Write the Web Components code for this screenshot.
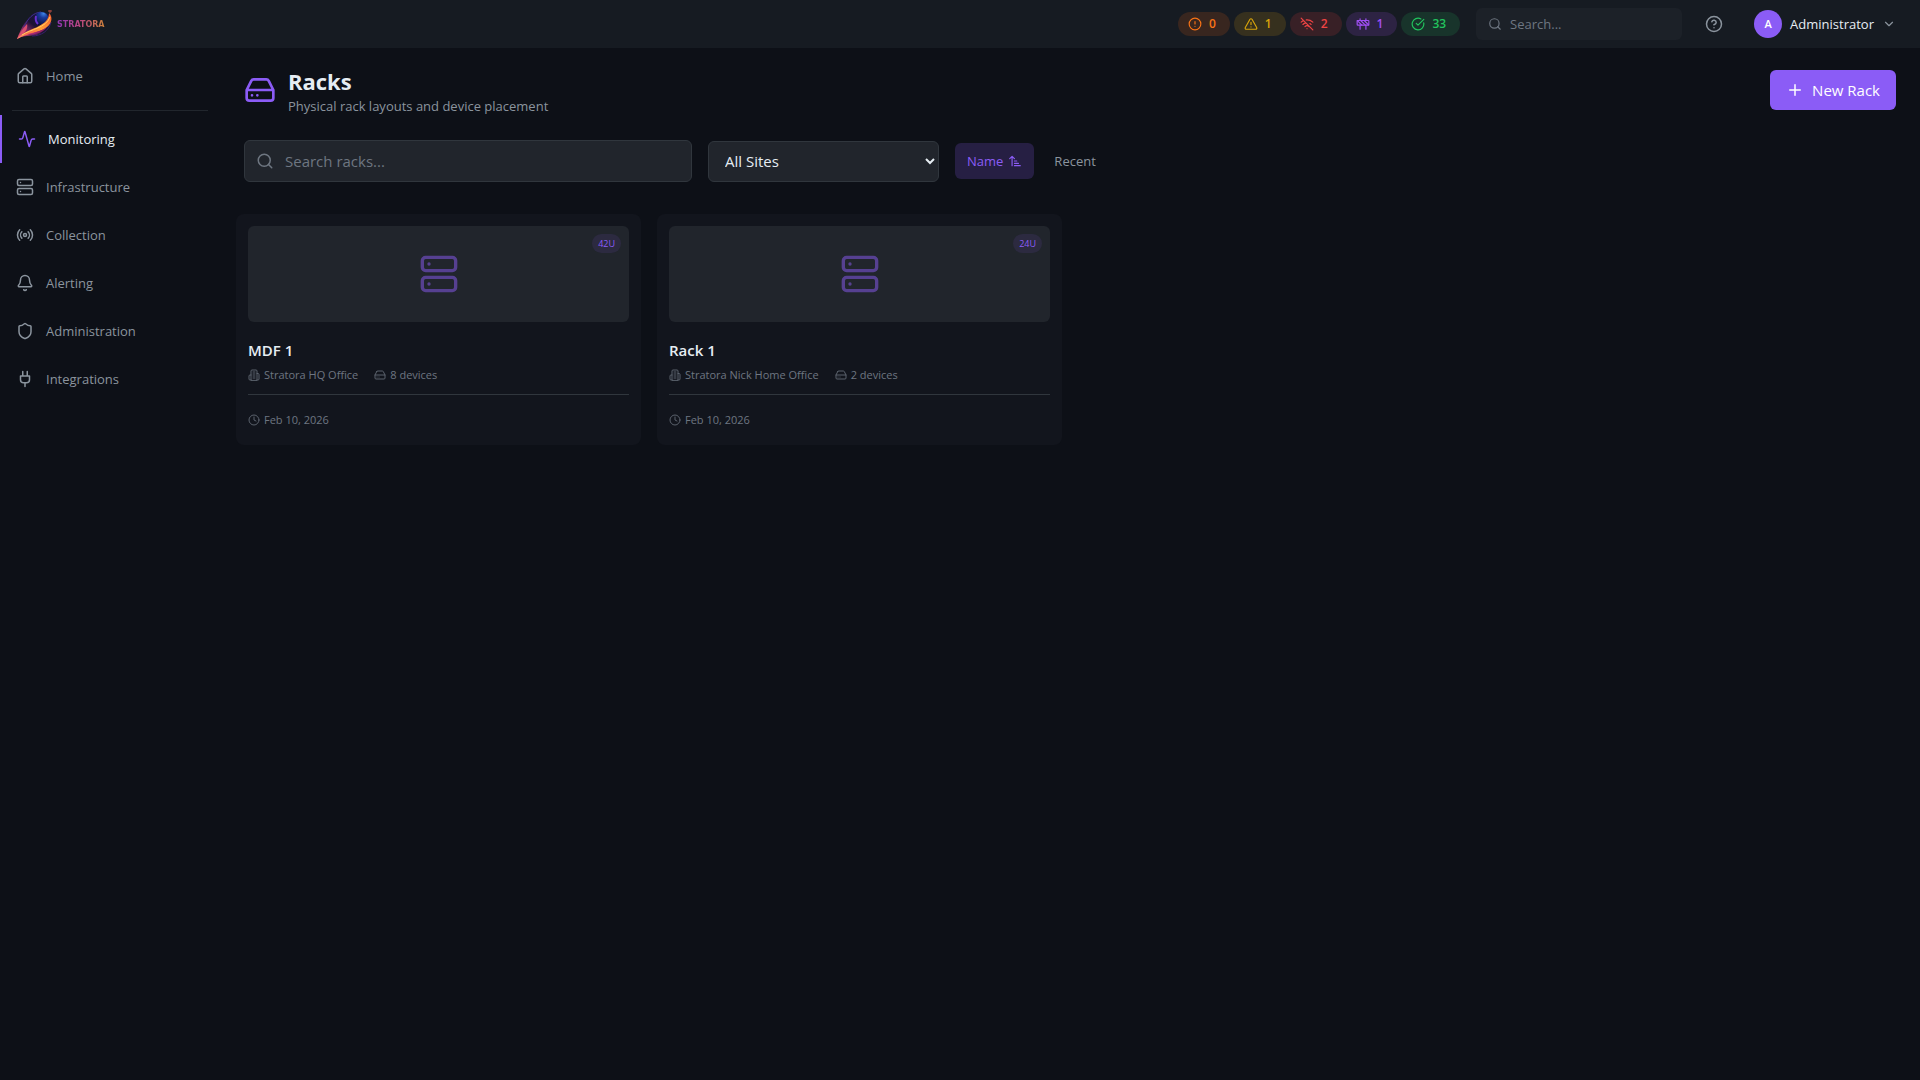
<!DOCTYPE html>
<html lang="en">
<head>
<meta charset="utf-8">
<title>Stratora - Racks</title>
<style>
    :root {
        --bg: #0d1017;
        --bar: #161b22;
        --card: #12151d;
        --surface: #21252c;
        --border: #30363d;
        --text: #e6edf3;
        --muted: #8b949e;
        --dim: #6e7681;
        --accent: #8b5cf6;
    }
    body {
        margin: 0;
        background: var(--bg);
        color: var(--text);
        font-family: "Open Sans", "Noto Sans", sans-serif;
        font-size: 13px;
        line-height: 20px;
    }
</style>
</head>
<body>
<rack-app></rack-app>

<template id="rack-app">
    <style>
        :host {
            display: flex;
            flex-direction: column;
            min-height: 100vh;
        }
        .body {
            display: flex;
            flex: 1;
        }
        main {
            flex: 1;
            min-width: 0;
            padding: 16px;
        }
        .cards {
            display: grid;
            grid-template-columns: repeat(auto-fill, minmax(360px, 1fr));
            gap: 16px;
            margin-top: 32px;
        }
    </style>
    <top-bar></top-bar>
    <div class="body">
        <side-nav></side-nav>
        <main>
            <page-header icon="drive">
                <span slot="title">Racks</span>
                <span slot="subtitle">Physical rack layouts and device placement</span>
                <span slot="action">New Rack</span>
            </page-header>
            <filter-bar></filter-bar>
            <div class="cards">
                <rack-card units="42U" site="Stratora HQ Office" devices="8 devices" date="Feb 10, 2026">MDF 1</rack-card>
                <rack-card units="24U" site="Stratora Nick Home Office" devices="2 devices" date="Feb 10, 2026">Rack 1</rack-card>
            </div>
        </main>
    </div>
</template>

<template id="top-bar">
    <style>
        :host {
            display: block;
            background: var(--bar);
        }
        header {
            display: flex;
            align-items: center;
            justify-content: space-between;
            height: 48px;
            padding: 0 24px 0 16px;
        }
        .right, .chips, .user {
            display: flex;
            align-items: center;
        }
        .chips {
            gap: 4px;
            margin-right: 16px;
        }
        .search {
            display: flex;
            align-items: center;
            gap: 8px;
            box-sizing: border-box;
            width: 206px;
            height: 32px;
            padding: 0 12px;
            border-radius: 6px;
            background: #1c2128;
            color: var(--dim);
        }
        input {
            flex: 1;
            min-width: 0;
            padding: 0;
            border: 0;
            outline: 0;
            background: none;
            color: var(--text);
            font: inherit;
        }
        input::placeholder {
            color: var(--dim);
        }
        button {
            border: 0;
            padding: 0;
            background: none;
            color: var(--muted);
            font: inherit;
            cursor: pointer;
        }
        .help {
            display: flex;
            margin: 0 31px 0 23px;
        }
        .user {
            gap: 8px;
        }
        .avatar {
            width: 28px;
            height: 28px;
            border-radius: 50%;
            background: var(--accent);
            color: #fff;
            font-size: 11px;
            font-weight: 600;
            line-height: 28px;
            text-align: center;
        }
        .name {
            color: var(--text);
        }
    </style>
    <header>
        <brand-logo>STRATORA</brand-logo>
        <div class="right">
            <div class="chips">
                <status-chip icon="alert" tone="orange">0</status-chip>
                <status-chip icon="warning" tone="yellow">1</status-chip>
                <status-chip icon="wifi-off" tone="red">2</status-chip>
                <status-chip icon="barrier" tone="purple">1</status-chip>
                <status-chip icon="check" tone="green">33</status-chip>
            </div>
            <div class="search">
                <svg-icon name="search" size="14"></svg-icon>
                <input type="search" placeholder="Search..." aria-label="Search">
            </div>
            <button class="help" aria-label="Help"><svg-icon name="help" size="18"></svg-icon></button>
            <button class="user">
                <span class="avatar">A</span>
                <span class="name">Administrator</span>
                <svg-icon name="chevron" size="14"></svg-icon>
            </button>
        </div>
    </header>
</template>

<template id="brand-logo">
    <style>
        :host {
            display: flex;
            align-items: center;
            gap: 3px;
        }
        span {
            padding-top: 2px;
            font: bold 8px/10px "DejaVu Sans", sans-serif;
            background: linear-gradient(90deg, #8f35b5, #b8477c 50%, #c9803a);
            -webkit-background-clip: text;
            background-clip: text;
            color: transparent;
        }
        svg {
            display: block;
        }
    </style>
    <svg width="38" height="32" viewBox="0 0 38 32" aria-hidden="true">
        <defs>
            <linearGradient id="flame" x1="0" y1="1" x2="1" y2="0">
                <stop offset="0" stop-color="#ffa070"/>
                <stop offset=".25" stop-color="#f9694a"/>
                <stop offset=".55" stop-color="#ff9b35"/>
                <stop offset="1" stop-color="#f4572f"/>
            </linearGradient>
            <linearGradient id="trail" x1="0" y1="1" x2="1" y2="0">
                <stop offset="0" stop-color="#e8566a"/>
                <stop offset=".3" stop-color="#7a2866"/>
                <stop offset=".5" stop-color="#1d1233"/>
                <stop offset="1" stop-color="#171a45"/>
            </linearGradient>
            <radialGradient id="globe" cx=".65" cy=".1" r=".9">
                <stop offset="0" stop-color="#3f86e8"/>
                <stop offset=".35" stop-color="#193a9c"/>
                <stop offset="1" stop-color="#0d0d35"/>
            </radialGradient>
        </defs>
        <path d="M1 31C5 21 11 7 21 4c8-2 14 2 14 8 0 7-7 13-14 15-7 1-13 0-20 4z" fill="url(#trail)"/>
        <path d="M16 28c9 0 17-5 19-14" fill="none" stroke="#3a1f70"/>
        <path d="M8 19C12 10 17 5 25 4" fill="none" stroke="#40308c"/>
        <circle cx="25.500" cy="11" r="7" fill="url(#globe)"/>
        <path d="M20 8c-1 4 0 6 2 8" fill="none" stroke="#6a30cf" stroke-width="2"/>
        <path d="M1 31C4 25 7 20 11 16c1 4-1 7-3 9z" fill="#d94e70"/>
        <path d="M1 31C8 23 16 22 23 18c6-3 10-7 10-13 4 4 3 10-2 14-7 6-20 6-30 12z" fill="url(#flame)"/>
        <path d="M12 26c7-2 14-3 19-7-4 6-12 8-19 7z" fill="#c5267c" opacity=".7"/>
        <path d="M6 27c9-6 24-7 28-18" fill="none" stroke="#ffd060"/>
        <path d="M34 2v3M32 3h4" stroke="#b04a42"/>
    </svg>
    <span><slot></slot></span>
</template>

<template id="status-chip">
    <style>
        :host {
            display: flex;
            align-items: center;
            gap: 7px;
            height: 24px;
            padding: 0 14px 0 10px;
            border-radius: 12px;
            font-size: 12px;
            font-weight: 600;
        }
        :host([tone="orange"]) { color: #f97316; background: #38261f; }
        :host([tone="yellow"]) { color: #d9a40b; background: #36301e; }
        :host([tone="red"]) { color: #ef4444; background: #382026; }
        :host([tone="purple"]) { color: #a04ff5; background: #2d2343; }
        :host([tone="green"]) { color: #22c55e; background: #18342b; }
    </style>
    <svg-icon size="14"></svg-icon>
    <slot></slot>
</template>

<template id="side-nav">
    <style>
        :host {
            display: block;
            width: 220px;
            padding-top: 4px;
        }
        hr {
            height: 1px;
            margin: 10px 12px 4px;
            border: 0;
            background: #21262d;
        }
    </style>
    <nav>
        <nav-item icon="home">Home</nav-item>
        <hr>
        <nav-item icon="activity" active>Monitoring</nav-item>
        <nav-item icon="server">Infrastructure</nav-item>
        <nav-item icon="radio">Collection</nav-item>
        <nav-item icon="bell">Alerting</nav-item>
        <nav-item icon="shield">Administration</nav-item>
        <nav-item icon="plug">Integrations</nav-item>
    </nav>
</template>

<template id="nav-item">
    <style>
        :host {
            display: block;
        }
        a {
            display: flex;
            align-items: center;
            gap: 12px;
            height: 48px;
            padding: 0 16px;
            color: var(--muted);
            text-decoration: none;
        }
        :host([active]) a {
            border-left: 2px solid var(--accent);
            color: var(--text);
        }
        :host([active]) svg-icon {
            color: var(--accent);
        }
    </style>
    <a href="#"><svg-icon size="18"></svg-icon><slot></slot></a>
</template>

<template id="page-header">
    <style>
        :host {
            display: flex;
            align-items: center;
            justify-content: space-between;
            padding: 0 8px;
            height: 52px;
        }
        .heading {
            display: flex;
            align-items: center;
            gap: 12px;
        }
        .heading svg-icon {
            color: var(--accent);
        }
        h1 {
            margin: 0;
            padding-top: 2px;
            font-size: 22px;
            font-weight: 700;
            line-height: 30px;
        }
        p {
            margin: 0;
            color: var(--muted);
        }
        button {
            display: flex;
            align-items: center;
            gap: 8px;
            height: 40px;
            padding: 0 16px;
            border: 0;
            border-radius: 6px;
            background: var(--accent);
            color: #fff;
            font: inherit;
            font-size: 15px;
            cursor: pointer;
        }
    </style>
    <div class="heading">
        <svg-icon size="32"></svg-icon>
        <div>
            <h1><slot name="title"></slot></h1>
            <p><slot name="subtitle"></slot></p>
        </div>
    </div>
    <button><svg-icon name="plus" size="18"></svg-icon><slot name="action"></slot></button>
</template>

<template id="filter-bar">
    <style>
        :host {
            display: flex;
            align-items: center;
            gap: 16px;
            margin-top: 24px;
            padding: 0 8px;
        }
        .search {
            display: flex;
            align-items: center;
            gap: 11px;
            flex: 0 1 448px;
            box-sizing: border-box;
            height: 42px;
            padding: 0 11px;
            border: 1px solid var(--border);
            border-radius: 6px;
            background: var(--surface);
            color: var(--dim);
        }
        input {
            flex: 1;
            min-width: 0;
            padding: 0;
            border: 0;
            outline: 0;
            background: none;
            color: var(--text);
            font: inherit;
            font-size: 15px;
        }
        input::placeholder {
            color: var(--dim);
        }
        select {
            width: 231px;
            height: 41px;
            padding: 0 12px;
            border: 1px solid var(--border);
            border-radius: 6px;
            background: var(--surface);
            color: var(--text);
            font: inherit;
            font-size: 15px;
        }
        .sort {
            display: flex;
            gap: 8px;
        }
        button {
            display: flex;
            align-items: center;
            gap: 5px;
            height: 36px;
            padding: 0 12px;
            border: 0;
            border-radius: 6px;
            background: none;
            color: var(--muted);
            font: inherit;
            cursor: pointer;
        }
        .on {
            background: #261f43;
            color: var(--accent);
        }
    </style>
    <div class="search">
        <svg-icon name="search" size="18"></svg-icon>
        <input type="search" placeholder="Search racks..." aria-label="Search racks">
    </div>
    <select aria-label="Site"><option>All Sites</option></select>
    <div class="sort">
        <button class="on">Name <svg-icon name="sort" size="14"></svg-icon></button>
        <button>Recent</button>
    </div>
</template>

<template id="rack-card">
    <style>
        :host {
            display: block;
            padding: 12px;
            border-radius: 8px;
            background: var(--card);
            color: var(--dim);
            font-size: 11px;
        }
        .preview {
            position: relative;
            display: flex;
            align-items: center;
            justify-content: center;
            height: 96px;
            border-radius: 6px;
            background: var(--surface);
        }
        .preview svg-icon {
            color: var(--accent);
            opacity: .5;
        }
        .units {
            position: absolute;
            top: 8px;
            right: 8px;
            padding: 0 6px;
            border-radius: 10px;
            background: #2c2a40;
            color: var(--accent);
            font-size: 9px;
            line-height: 19px;
        }
        h2 {
            margin: 16px 0 0;
            color: var(--text);
            font-size: 15px;
            font-weight: 600;
            line-height: 24px;
        }
        .meta, .item, .date {
            display: flex;
            align-items: center;
        }
        .meta {
            gap: 16px;
            margin-top: 3px;
        }
        .item, .date {
            gap: 4px;
        }
        .date {
            margin-top: 9px;
            padding: 15px 0 3px;
            border-top: 1px solid var(--border);
        }
        .item svg-icon, .date svg-icon {
            opacity: .8;
        }
    </style>
    <div class="preview">
        <svg-icon name="server" size="40"></svg-icon>
        <span class="units"></span>
    </div>
    <h2><slot></slot></h2>
    <div class="meta">
        <div class="item"><svg-icon name="building" size="12"></svg-icon><span class="site"></span></div>
        <div class="item"><svg-icon name="drive" size="12"></svg-icon><span class="devices"></span></div>
    </div>
    <div class="date"><svg-icon name="clock" size="12"></svg-icon><time></time></div>
</template>

<script>
    // 24x24 stroke icons
    const ICONS = {
        home: '<path d="M15 21v-8a1 1 0 0 0-1-1h-4a1 1 0 0 0-1 1v8"/><path d="M3 10a2 2 0 0 1 .709-1.528l7-5.999a2 2 0 0 1 2.582 0l7 5.999A2 2 0 0 1 21 10v9a2 2 0 0 1-2 2H5a2 2 0 0 1-2-2z"/>',
        activity: '<path d="M22 12h-2.480a2 2 0 0 0-1.930 1.460l-2.350 8.360a.25.25 0 0 1-.48 0L9.240 2.180a.25.25 0 0 0-.48 0l-2.350 8.360A2 2 0 0 1 4.490 12H2"/>',
        server: '<rect x="2" y="2" width="20" height="8" rx="2"/><rect x="2" y="14" width="20" height="8" rx="2"/><path d="M6 6h.01M6 18h.01"/>',
        radio: '<path d="M4.900 19.100C1 15.200 1 8.800 4.900 4.900M7.800 16.200c-2.300-2.300-2.300-6.100 0-8.500M16.200 7.800c2.300 2.300 2.300 6.100 0 8.500M19.100 4.900C23 8.800 23 15.100 19.100 19"/><circle cx="12" cy="12" r="2"/>',
        bell: '<path d="M10.268 21a2 2 0 0 0 3.464 0M3.262 15.326A1 1 0 0 0 4 17h16a1 1 0 0 0 .74-1.673C19.410 13.956 18 12.499 18 8A6 6 0 0 0 6 8c0 4.499-1.411 5.956-2.738 7.326"/>',
        shield: '<path d="M20 13c0 5-3.500 7.500-7.660 8.950a1 1 0 0 1-.67-.01C7.500 20.500 4 18 4 13V6a1 1 0 0 1 1-1c2 0 4.500-1.200 6.240-2.720a1.170 1.170 0 0 1 1.520 0C14.510 3.810 17 5 19 5a1 1 0 0 1 1 1z"/>',
        plug: '<path d="M12 22v-5M9 8V2M15 8V2M18 8v5a4 4 0 0 1-4 4h-4a4 4 0 0 1-4-4V8z"/>',
        drive: '<path d="M22 12H2M5.450 5.110 2 12v6a2 2 0 0 0 2 2h16a2 2 0 0 0 2-2v-6l-3.450-6.890A2 2 0 0 0 16.760 4H7.240a2 2 0 0 0-1.790 1.110zM6 16h.01M10 16h.01"/>',
        search: '<circle cx="11" cy="11" r="8"/><path d="m21 21-4.300-4.300"/>',
        help: '<circle cx="12" cy="12" r="10"/><path d="M9.090 9a3 3 0 0 1 5.830 1c0 2-3 3-3 3M12 17h.01"/>',
        chevron: '<path d="m6 9 6 6 6-6"/>',
        plus: '<path d="M5 12h14M12 5v14"/>',
        sort: '<path d="m3 8 4-4 4 4M7 4v16M11 12h4M11 16h7M11 20h10"/>',
        alert: '<circle cx="12" cy="12" r="10"/><path d="M12 8v4M12 16h.01"/>',
        warning: '<path d="m21.730 18-8-14a2 2 0 0 0-3.480 0l-8 14A2 2 0 0 0 4 21h16a2 2 0 0 0 1.730-3M12 9v4M12 17h.01"/>',
        'wifi-off': '<path d="M12 20h.01M8.500 16.429a5 5 0 0 1 7 0M5 12.859a10 10 0 0 1 5.170-2.690M19 12.859a10 10 0 0 0-2.007-1.523M2 8.820a15 15 0 0 1 4.177-2.643M22 8.820a15 15 0 0 0-11.288-3.764M2 2l20 20"/>',
        barrier: '<rect x="2" y="6" width="20" height="8" rx="1"/><path d="M17 14v7M7 14v7M17 3v3M7 3v3M10 14 2.300 6.300M14 6l7.700 7.700M8 6l8 8"/>',
        check: '<path d="M21.801 10A10 10 0 1 1 17 3.335M9 11l3 3L22 4"/>',
        building: '<path d="M6 22V4a2 2 0 0 1 2-2h8a2 2 0 0 1 2 2v18zM6 12H4a2 2 0 0 0-2 2v6a2 2 0 0 0 2 2h2M18 9h2a2 2 0 0 1 2 2v9a2 2 0 0 1-2 2h-2M10 6h4M10 10h4M10 14h4M10 18h4"/>',
        clock: '<circle cx="12" cy="12" r="10"/><path d="M12 6v6l4 2"/>'
    };

    class SvgIcon extends HTMLElement {
        constructor() {
            super();
            this.attachShadow({mode: 'open'});
        }
        static get observedAttributes() {
            return ['name'];
        }
        attributeChangedCallback() {
            const size = this.getAttribute('size') || 16;
            this.shadowRoot.innerHTML = `
                <style>
                    :host { display: block; flex: none; }
                    svg { display: block; fill: none; stroke: currentColor; stroke-width: 2; stroke-linecap: round; stroke-linejoin: round; }
                </style>
                <svg width="${size}" height="${size}" viewBox="0 0 24 24" aria-hidden="true">${ICONS[this.getAttribute('name')]}</svg>`;
        }
    }

    // clones the template whose id is the tag name
    class BaseElement extends HTMLElement {
        constructor() {
            super();
            this.attachShadow({mode: 'open'});
        }
        connectedCallback() {
            const template = document.getElementById(this.localName);
            this.shadowRoot.replaceChildren(template.content.cloneNode(true));
            if (this.hasAttribute('icon')) {
                this.shadowRoot.querySelector('svg-icon').setAttribute('name', this.getAttribute('icon'));
            }
        }
    }

    class RackCard extends BaseElement {
        connectedCallback() {
            super.connectedCallback();
            this.fill('.units', 'units');
            this.fill('.site', 'site');
            this.fill('.devices', 'devices');
            this.fill('time', 'date');
        }
        fill(selector, attribute) {
            this.shadowRoot.querySelector(selector).textContent = this.getAttribute(attribute);
        }
    }

    customElements.define('svg-icon', SvgIcon);
    customElements.define('brand-logo', class extends BaseElement {});
    customElements.define('status-chip', class extends BaseElement {});
    customElements.define('nav-item', class extends BaseElement {});
    customElements.define('side-nav', class extends BaseElement {});
    customElements.define('top-bar', class extends BaseElement {});
    customElements.define('page-header', class extends BaseElement {});
    customElements.define('filter-bar', class extends BaseElement {});
    customElements.define('rack-card', RackCard);
    customElements.define('rack-app', class extends BaseElement {});
</script>
</body>
</html>
